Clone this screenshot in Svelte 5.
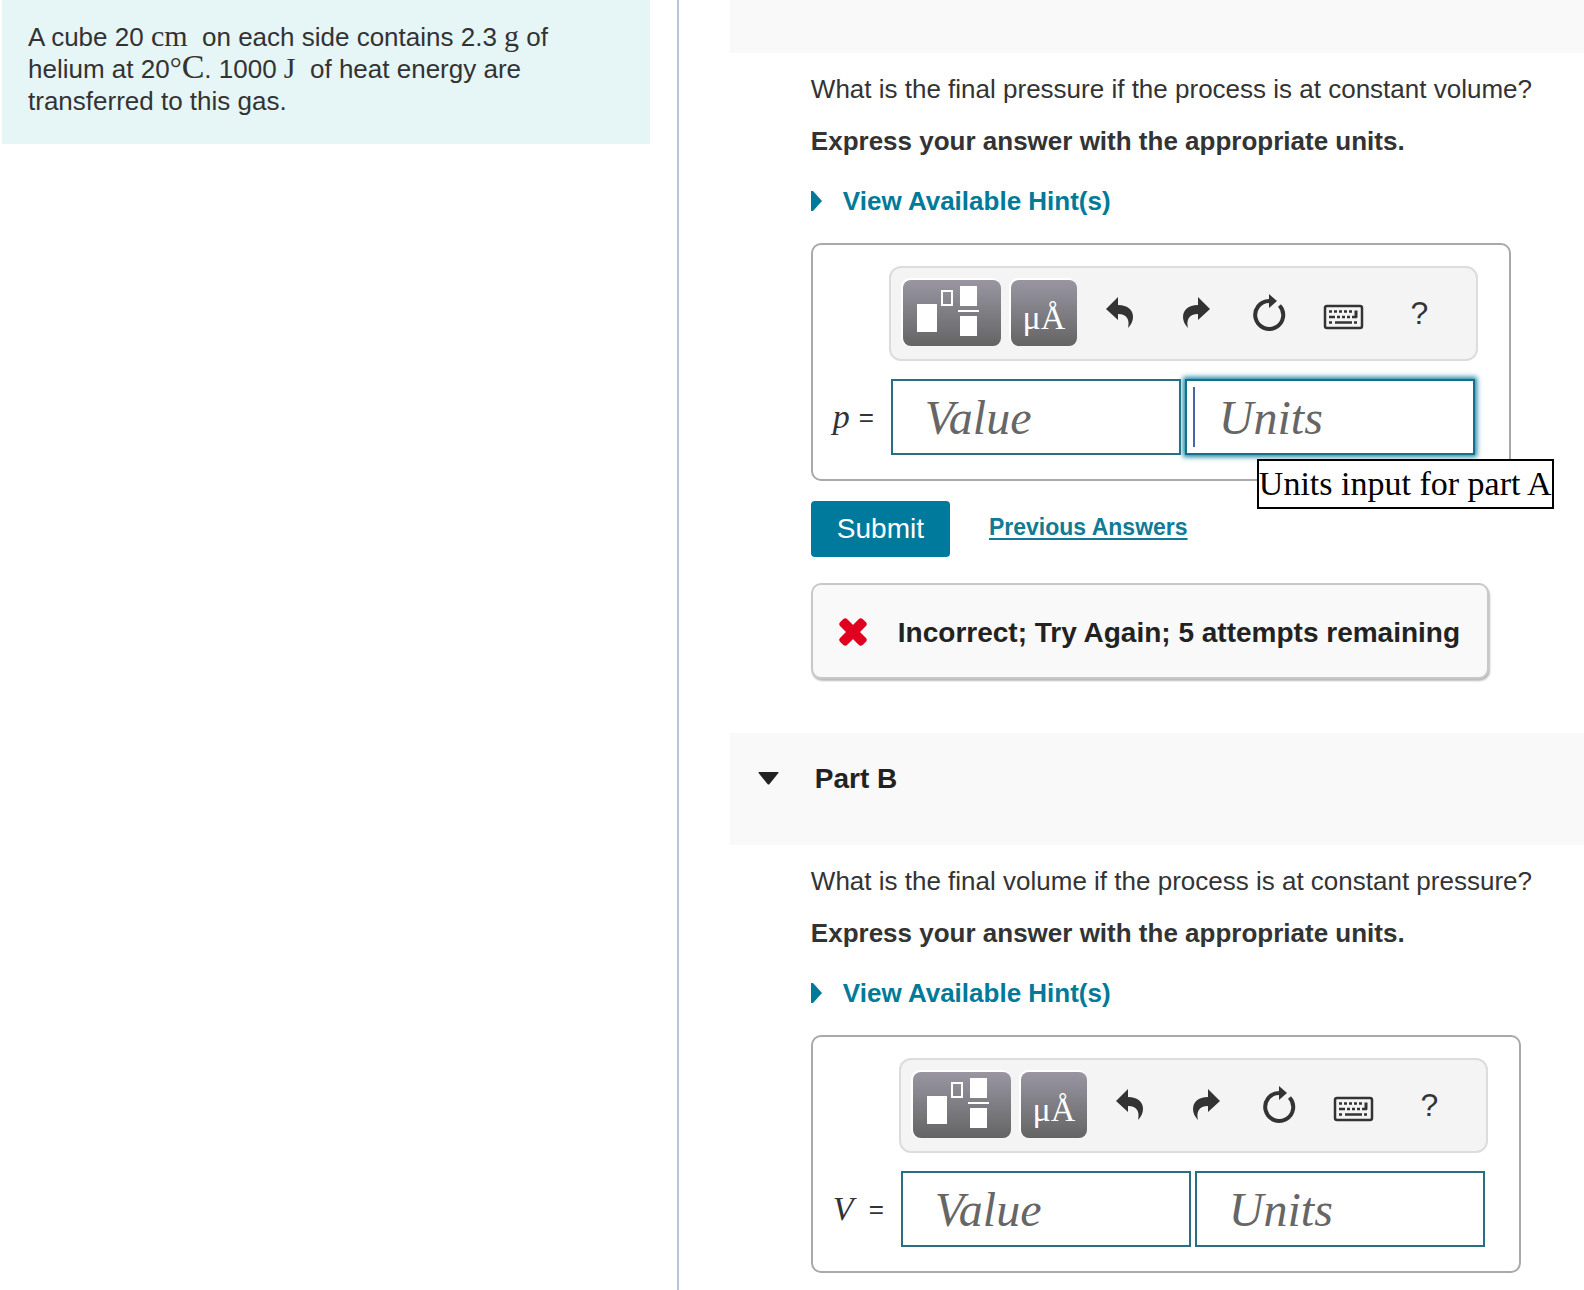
<!--
  Assignment page: problem statement on the left,
  the answer parts on the right.
-->
<script lang="ts">
  interface Part {
    id: string;
    title: string;
    question: string;
    symbol: string;
    feedback?: string;
    active?: boolean;
  }

  const parts: Part[] = [
    {
      id: 'A',
      title: '',
      question: 'What is the final pressure if the process is at constant volume?',
      symbol: 'p',
      feedback: 'Incorrect; Try Again; 5 attempts remaining',
      active: true
    },
    {
      id: 'B',
      title: 'Part B',
      question: 'What is the final volume if the process is at constant pressure?',
      symbol: 'V'
    }
  ];
</script>

<div class="page">
  <aside class="side">
    <p class="problem">
      A cube 20 <span class="unit">cm</span>&nbsp; on each side contains 2.3 <span class="unit">g</span> of
      helium at 20<span class="unit">°</span><span class="unit big">C</span>. 1000 <span class="unit">J</span>&nbsp; of heat energy are
      transferred to this gas.
    </p>
  </aside>

  <main class="parts">
    {#each parts as part (part.id)}
      <section class="part">
        <header class="part-header" class:cut={!part.title}>
          {#if part.title}
            <button class="collapse" type="button" aria-label="Collapse {part.title}">
              <svg width="22" height="13" viewBox="0 0 22 13"><path d="M1 0h19q1 0 .4 1L11.500 12q-1 1-2 0L.6 1Q0 0 1 0z" fill="#222" /></svg>
            </button>
            <h2>{part.title}</h2>
          {/if}
        </header>

        <div class="body">
          <p class="question">{part.question}</p>
          <p class="instruction">Express your answer with the appropriate units.</p>
          <a class="hint" href="#hints-{part.id}">
            <svg width="12" height="20" viewBox="0 0 12 20"><path d="M0 0h2l9 10-9 10H0z" fill="#007a99" /></svg>
            View Available Hint(s)
          </a>

          <div class="answer">
            <div class="toolbar">
              <button class="tool templates" type="button" aria-label="Templates">
                <svg width="98" height="66" viewBox="0 0 98 66">
                  <path d="M14 24h20v28H14zM57 6h17v20H57zM57 36h17v20H57zM55 30h21v2H55z" fill="#fff" />
                  <path d="M39 11h10v14H39z" fill="none" stroke="#fff" stroke-width="2" />
                </svg>
              </button>
              <button class="tool symbols" type="button" aria-label="Symbols">μÅ</button>
              <div class="actions">
                <button type="button" aria-label="Undo">
                  <svg width="30" height="34" viewBox="0 0 30 34">
                    <path d="M2 13L14 1v8c10 0 15 5 15 12 0 4-2 8-5 11 2-8-1-14-10-14v6z" fill="#333" />
                  </svg>
                </button>
                <button type="button" aria-label="Redo">
                  <svg width="34" height="34" viewBox="0 0 34 34">
                    <path d="M33 13L21 1v8C11 9 6 14 6 21c0 4 2 8 5 11-2-8 1-14 10-14v6z" fill="#333" />
                  </svg>
                </button>
                <button type="button" aria-label="Reset">
                  <svg width="34" height="38" viewBox="0 0 34 38">
                    <path d="M27.500 11.500A14 14 0 1 1 17 7" fill="none" stroke="#333" stroke-width="4" />
                    <path d="M17 0l8 7-8 7z" fill="#333" />
                  </svg>
                </button>
                <button class="keyboard" type="button" aria-label="Keyboard shortcuts">
                  <svg width="40" height="26" viewBox="0 0 40 26">
                    <rect x="1" y="2" width="37" height="22" rx="2" fill="none" stroke="#333" stroke-width="2.500" />
                    <path d="M5 7.500h3M10 7.500h3M15 7.500h3M20 7.500h3M25 7.500h3M5 13h6M13 13h3M18 13h3M23 13h3M28 13h5M5 18.500h3M11 18.500h17M30 18.500h3" stroke="#333" stroke-width="2.500" />
                    <path d="M30.500 6.500h3v7h-3z" fill="#333" />
                  </svg>
                </button>
                <button class="help" type="button" aria-label="Help">?</button>
              </div>
            </div>

            <label class="symbol" class:wide={part.symbol === 'V'} for="value-{part.id}"><i>{part.symbol}</i><span>=</span></label>
            <div class="fields">
              <div class="field">
                <input id="value-{part.id}" type="text" placeholder="Value" />
              </div>
              <div class="field" class:active={part.active}>
                <input type="text" placeholder="Units" aria-label="Units input for part {part.id}" />
                {#if part.active}
                  <span class="caret"></span>
                  <span class="tooltip" role="tooltip">Units input for part {part.id}</span>
                {/if}
              </div>
            </div>
          </div>

          {#if part.feedback}
            <div class="submit-row">
              <button class="submit" type="button">Submit</button>
              <a class="previous" href="#previous-{part.id}">Previous Answers</a>
            </div>
            <div class="feedback" role="status">
              <svg width="28" height="28" viewBox="0 0 28 28">
                <g fill="#e0001f">
                  <rect x="-2" y="8" width="32" height="10" rx="3" transform="rotate(45 14 13)" />
                  <rect x="-2" y="8" width="32" height="10" rx="3" transform="rotate(-45 14 13)" />
                </g>
              </svg>
              <span>{part.feedback}</span>
            </div>
          {/if}
        </div>
      </section>
    {/each}
  </main>
</div>

<style>
  :global(body) {
    background: #fff;
    color: #333;
    font-family: "Liberation Sans", Arial, sans-serif;
    font-size: 26px;
    line-height: 32px;
  }

  p,
  h2 {
    margin: 0;
  }

  button {
    margin: 0;
    padding: 0;
    border: 0;
    background: none;
    font: inherit;
    color: inherit;
  }

  svg {
    display: block;
    overflow: visible;
  }

  .page {
    display: grid;
    grid-template-columns: 3fr 4fr;
    min-height: 100vh;
  }

  .side {
    padding: 0 27px 0 2px;
    border-right: 2px solid #b8c5d9;
  }

  .problem {
    padding: 21px 26px 27px;
    background: #e6f5f6;
  }

  .unit {
    font-family: "Liberation Serif", serif;
    font-size: 30px;
    line-height: 0;
  }

  .unit.big {
    font-size: 34px;
  }

  .parts {
    min-width: 0;
    padding-left: 51px;
  }

  .part-header {
    display: flex;
    align-items: flex-start;
    gap: 35px;
    min-height: 53px;
    padding: 30px 28px 50px;
    box-sizing: border-box;
    background: #f9f9f9;
  }

  .part-header.cut {
    padding: 0;
  }

  .collapse {
    padding-top: 9px;
  }

  h2 {
    font-size: 28px;
    line-height: 32px;
    color: #222;
  }

  .body {
    display: flex;
    flex-direction: column;
    align-items: flex-start;
    padding: 20px 0 54px 81px;
  }

  .question,
  .instruction {
    white-space: nowrap;
  }

  .instruction {
    margin-top: 20px;
    font-weight: bold;
  }

  .hint {
    display: flex;
    align-items: center;
    gap: 20px;
    margin-top: 28px;
    color: #007a99;
    font-weight: bold;
    text-decoration: none;
  }

  .answer {
    display: grid;
    grid-template-columns: auto auto;
    row-gap: 18px;
    margin-top: 26px;
    padding: 21px 31px 24px 20px;
    border: 2px solid #a9a9a9;
    border-radius: 10px;
  }

  .toolbar {
    grid-column: 2;
    display: flex;
    gap: 10px;
    padding: 12px 19px 13px 12px;
    border: 2px solid #dcdcdc;
    border-radius: 12px;
    background: #f4f4f4;
  }

  .tool {
    height: 66px;
    border-radius: 8px;
    background: linear-gradient(#9996a2, #646464);
    box-shadow: -1px -1px 0 1px #fff;
    color: #fff;
  }

  .templates {
    width: 98px;
  }

  .symbols {
    width: 66px;
    padding-top: 10px;
    font-family: "Liberation Serif", serif;
    font-size: 34px;
  }

  .actions {
    display: flex;
    align-items: center;
    margin-left: -5px;
  }

  .actions button {
    display: flex;
    justify-content: center;
    width: 75px;
  }

  .keyboard {
    padding-top: 8px;
  }

  .help {
    font-size: 32px;
  }

  .symbol {
    display: flex;
    align-items: center;
    justify-content: space-between;
    width: 41px;
    margin-right: 15px;
  }

  .symbol.wide {
    width: 51px;
  }

  .symbol i {
    font-family: "Liberation Serif", serif;
    font-size: 34px;
  }

  .fields {
    display: flex;
    gap: 4px;
    padding: 0 3px 0 2px;
  }

  .field {
    position: relative;
    width: 290px;
  }

  input {
    display: block;
    box-sizing: border-box;
    width: 100%;
    height: 76px;
    padding: 0 32px;
    border: 2px solid #276f84;
    border-radius: 0;
    outline: 0;
    background: #fff;
    font-family: "Liberation Serif", serif;
    font-size: 48px;
    font-style: italic;
  }

  input::placeholder {
    color: #666;
    opacity: 1;
  }

  .active input {
    border-color: #14708a;
    box-shadow: 0 0 5px 2px #1a86a3;
  }

  .caret {
    position: absolute;
    top: 8px;
    left: 8px;
    width: 2px;
    height: 60px;
    background: #4666a8;
  }

  .tooltip {
    position: absolute;
    top: 80px;
    left: 72px;
    border: 2px solid #000;
    background: #fff;
    color: #000;
    font-family: "Liberation Serif", serif;
    font-size: 34px;
    line-height: 46px;
    white-space: nowrap;
  }

  .submit-row {
    display: flex;
    align-items: center;
    gap: 39px;
    margin-top: 20px;
  }

  .submit {
    height: 56px;
    padding: 0 26px;
    border-radius: 4px;
    background: #007a9c;
    color: #fff;
    font-size: 28px;
  }

  .previous {
    padding-bottom: 4px;
    color: #117a94;
    font-size: 23px;
    font-weight: bold;
    text-underline-offset: 3px;
  }

  .feedback {
    display: flex;
    align-items: center;
    gap: 31px;
    margin-top: 26px;
    padding: 32px 27px 28px 26px;
    border: 2px solid #c8c8c8;
    border-radius: 10px;
    background: #f9f9f9;
    box-shadow: 1px 2px 2px #bbb;
    color: #222;
    font-size: 28px;
    font-weight: bold;
    white-space: nowrap;
  }
</style>
